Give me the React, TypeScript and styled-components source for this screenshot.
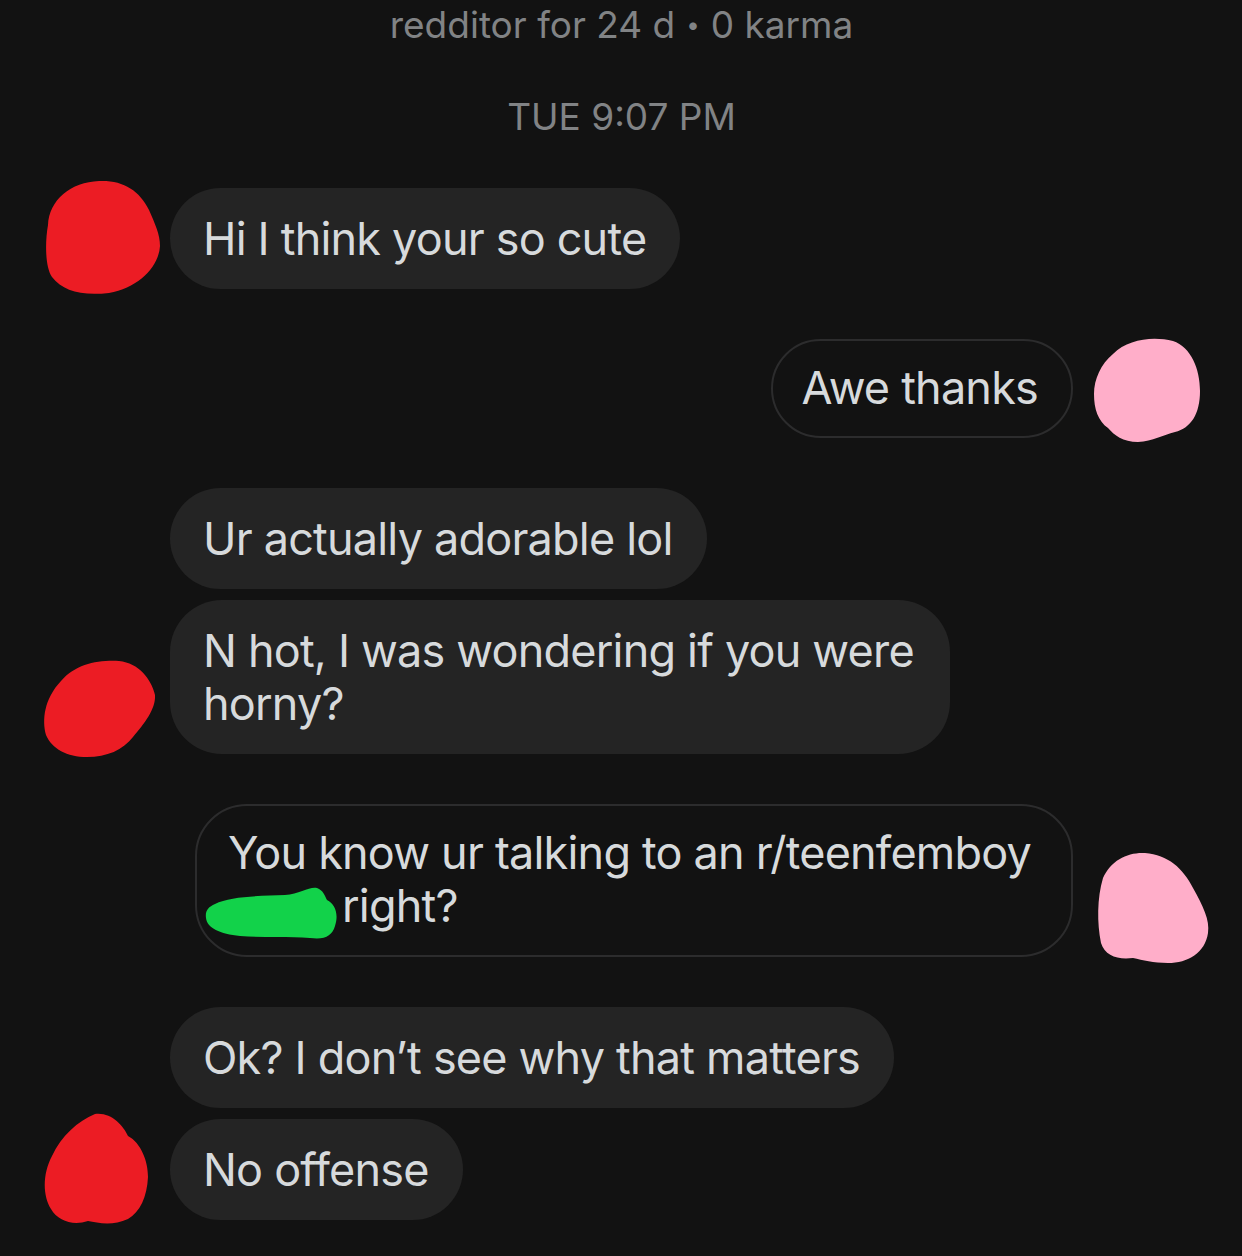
import React from "react";
import styled, { createGlobalStyle } from "styled-components";

const GlobalStyle = createGlobalStyle`
  html, body {
    margin: 0;
    padding: 0;
    background: #121212;
  }
  body {
    font-family: Inter, "Noto Sans", "Liberation Sans", sans-serif;
    -webkit-font-smoothing: antialiased;
  }
`;

const Page = styled.div`
  width: 1242px;
  height: 1256px;
  overflow: hidden;
  background: #121212;
  box-sizing: border-box;
  padding: 3px 42px 0 43px;
  display: flex;
  flex-direction: column;
`;

const Header = styled.header`
  display: flex;
  flex-direction: column;
  align-items: center;
  gap: 48px;
  margin-bottom: 49px;
`;

const Meta = styled.div`
  color: #818385;
  font-size: 37px;
  line-height: 44px;
  height: 44px;
  white-space: nowrap;
`;

const Dot = styled.span`
  display: inline-block;
  margin: 0 11px;
  font-size: 24px;
  line-height: 0;
  vertical-align: 5px;
`;

const Thread = styled.div`
  display: flex;
  flex-direction: column;
  gap: 50px;
`;

const Group = styled.div<{ $mine?: boolean }>`
  display: flex;
  flex-direction: ${(p) => (p.$mine ? "row-reverse" : "row")};
  align-items: flex-end;
  gap: 10px;
`;

const AvatarSlot = styled.div`
  width: 117px;
  height: 113px;
  flex-shrink: 0;
  margin-top: -20px;
  margin-bottom: -4px;
  svg {
    overflow: visible;
    display: block;
  }
`;

const Stack = styled.div<{ $mine?: boolean }>`
  display: flex;
  flex-direction: column;
  align-items: ${(p) => (p.$mine ? "flex-end" : "flex-start")};
  gap: 11px;
  min-width: 0;
`;

const Bubble = styled.div<{ $mine?: boolean; $wrapped?: boolean }>`
  box-sizing: border-box;
  color: #d7dadc;
  font-size: 45px;
  line-height: 53px;
  letter-spacing: -0.8px;
  border-radius: 52px;
  white-space: nowrap;
  background: ${(p) => (p.$mine ? "#121212" : "#242424")};
  border: ${(p) => (p.$mine ? "2px solid #2c2c2d" : "none")};
  padding: ${(p) =>
    p.$mine
      ? p.$wrapped
        ? "20px 40px 23px 31px"
        : "20px 33px 22px 28px"
      : `24px ${p.$wrapped ? 36 : 34}px 24px 33px`};
`;

const Line = styled.div`
  display: block;
`;

const Redaction = styled.svg`
  display: inline-block;
  width: 132px;
  height: 54px;
  margin-left: -23px;
  margin-right: 5px;
  margin-bottom: -10px;
  vertical-align: -8px;
`;

type BlobProps = { d: string; color: string };

const Blob = ({ d, color }: BlobProps) => (
  <svg width="117" height="113" viewBox="0 0 117 113">
    <path d={d} fill={color} />
  </svg>
);

const RED = "#ec1c24";
const PINK = "#ffaec9";
const GREEN = "#12d24a";

const blobs = {
  red1: "M5,45 C6,20 28,2 56,1 C80,0 96,10 106,30 C112,44 117,54 117,66 C116,86 96,108 66,113 C38,116 20,111 9,97 C2,87 2,62 5,45 Z",
  pink1: "M30,25 C45,10 70,7 90,12 C108,18 117,40 117,62 C117,85 108,99 92,103 C80,106 70,112 55,113 C40,113 31,106 25,99 C15,92 11,80 11,65 C11,50 18,35 30,25 Z",
  red2: "M18,36 C33,19 54,15 76,16 C96,18 108,34 112,50 C113,64 101,79 90,92 C80,105 64,112 44,112 C24,112 9,104 3,90 C-1,75 1,54 18,36 Z",
  pink2: "M20,30 C28,12 45,4 62,5 C85,7 100,20 110,40 C120,58 127,72 125,85 C122,105 105,115 85,115 C70,115 60,112 50,110 C35,112 22,108 18,95 C14,75 14,50 20,30 Z",
  red3: "M9,45 C18,25 35,10 52,3 C68,1 80,14 85,25 C98,32 105,50 105,66 C104,86 97,101 85,108 C70,115 55,112 45,110 C30,115 15,110 8,98 C0,85 -1,64 9,45 Z",
};

export default function App() {
  return (
    <>
      <GlobalStyle />
      <Page>
        <Header>
          <Meta>
            redditor for 24 d<Dot>•</Dot>0 karma
          </Meta>
          <Meta>TUE 9:07 PM</Meta>
        </Header>
        <Thread>
          <Group>
            <AvatarSlot>
              <Blob d={blobs.red1} color={RED} />
            </AvatarSlot>
            <Stack>
              <Bubble>Hi I think your so cute</Bubble>
            </Stack>
          </Group>

          <Group $mine>
            <AvatarSlot>
              <Blob d={blobs.pink1} color={PINK} />
            </AvatarSlot>
            <Stack $mine>
              <Bubble $mine>Awe thanks</Bubble>
            </Stack>
          </Group>

          <Group>
            <AvatarSlot>
              <Blob d={blobs.red2} color={RED} />
            </AvatarSlot>
            <Stack>
              <Bubble>Ur actually adorable lol</Bubble>
              <Bubble $wrapped>
                <Line>N hot, I was wondering if you were</Line>
                <Line>horny?</Line>
              </Bubble>
            </Stack>
          </Group>

          <Group $mine>
            <AvatarSlot>
              <Blob d={blobs.pink2} color={PINK} />
            </AvatarSlot>
            <Stack $mine>
              <Bubble $mine $wrapped>
                <Line>You know ur talking to an r/teenfemboy</Line>
                <Line>
                  <Redaction viewBox="0 0 132 54">
                    <path
                      d="M10,18 C25,10 55,10 80,9 C95,8 105,0 112,2 C118,4 120,10 122,14 C130,18 134,28 130,40 C127,50 120,54 105,52 C85,50 60,52 35,50 C15,48 2,42 1,32 C0,25 3,21 10,18 Z"
                      fill={GREEN}
                    />
                  </Redaction>
                  right?
                </Line>
              </Bubble>
            </Stack>
          </Group>

          <Group>
            <AvatarSlot>
              <Blob d={blobs.red3} color={RED} />
            </AvatarSlot>
            <Stack>
              <Bubble>Ok? I don’t see why that matters</Bubble>
              <Bubble>No offense</Bubble>
            </Stack>
          </Group>
        </Thread>
      </Page>
    </>
  );
}
